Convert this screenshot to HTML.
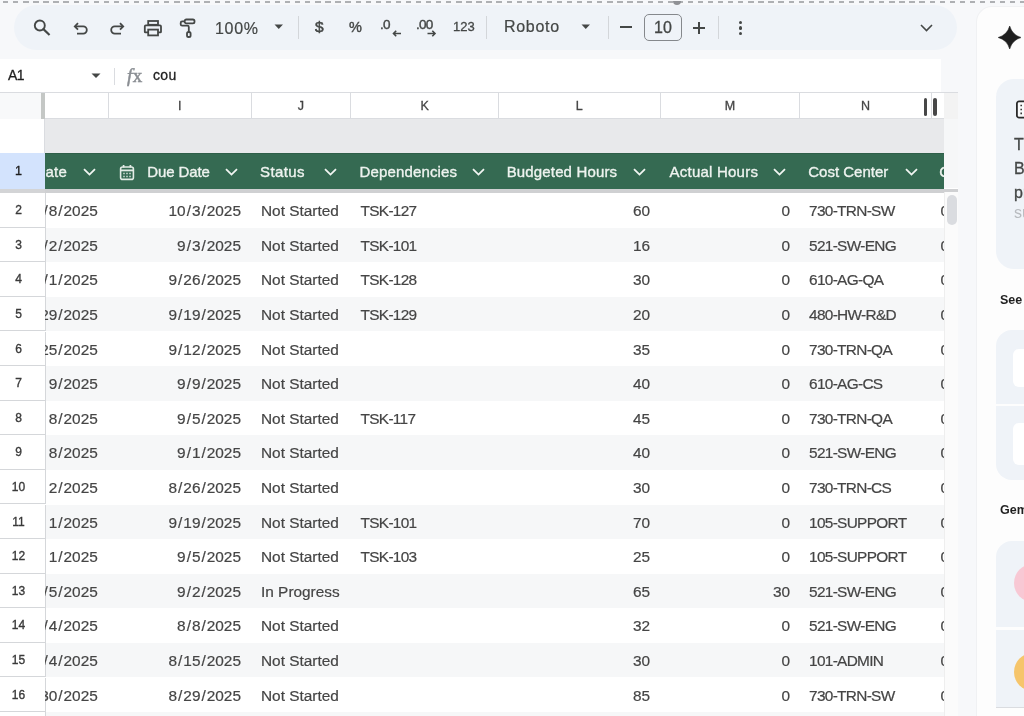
<!DOCTYPE html>
<html><head><meta charset="utf-8">
<style>
*{box-sizing:border-box;margin:0;padding:0}
html,body{width:1024px;height:716px;overflow:hidden}
#root{position:absolute;left:0;top:0;width:1024px;height:716px;overflow:hidden;will-change:transform;background:#f7f8fa}
body{position:relative;background:#f7f8fa;font-family:"Liberation Sans",sans-serif;color:#3c4043}
.abs{position:absolute}
.dash{position:absolute;left:-6.67px;top:1px;width:1040px;height:2px;background:repeating-linear-gradient(90deg,#aeb0b3 0 5.3px,transparent 5.3px 10.07px)}
.pill{position:absolute;left:14px;top:5px;width:943px;height:45px;border-radius:22.5px;background:#eff3f8}
.tb{position:absolute;color:#444746}
.sep{position:absolute;width:1px;background:#d3d6da}
.fbar{position:absolute;left:0;top:59px;width:941px;height:33px;background:#fff}
.grid{position:absolute;left:0;top:92px;width:958px;height:624px;background:#fff;overflow:hidden}
.colhdr{position:absolute;left:0;top:0;width:958px;height:27px;background:#fff;border-top:1px solid #dadce0;border-bottom:1px solid #dadce0}
.ch{position:absolute;top:0;height:26px;border-left:1px solid #dadce0;font-size:12.5px;color:#444;text-align:center;line-height:26px;-webkit-text-stroke:0.3px #444}
.t{position:absolute;white-space:nowrap;font-size:15.4px;line-height:18px;color:#454545;-webkit-text-stroke:0.2px #454545}
.sl{font-style:normal;margin:0 1px}
.w{letter-spacing:0px}
.c{letter-spacing:-0.68px}
.chev{position:absolute}
.rn{position:absolute;left:0;width:46px;border-bottom:1px solid #d5d7da;border-right:1px solid #d5d7da;background:#fff;font-size:12px;color:#3a3a3a;text-align:center;padding-right:8px;-webkit-text-stroke:0.35px #3a3a3a}
.band{position:absolute;left:45px;width:899px;background:#f6f7f8}
.hdr{position:absolute;left:45px;top:61px;width:899px;height:36px;background:#356a52;overflow:hidden;border-top:1px solid #2f5f49}
.ht{position:absolute;white-space:nowrap;font-size:15px;color:#eef3ef;line-height:18px;top:8.5px;letter-spacing:0.22px;-webkit-text-stroke:0.35px #eef3ef}
.panel{position:absolute;left:976px;top:6px;width:60px;height:720px;background:#fdfdfd;border-radius:16px 0 0 0;border-left:1px solid #f0f1f3;border-top:1px solid #f0f1f3}
.card{position:absolute;left:996px;width:40px;background:#eff3f8}
</style></head><body><div id="root">
<div class="dash"></div>
<div class="pill"></div>
<div class="abs" style="left:673px;top:1px;width:8px;height:4px;border-radius:0 0 4px 4px;background:#8f9195"></div>


<svg class="abs" style="left:32px;top:18px" width="20" height="20" viewBox="0 0 20 20"><circle cx="7.8" cy="7.5" r="5" fill="none" stroke="#444746" stroke-width="1.9"/><path d="M11.4 11.1 L16.8 16.3" stroke="#444746" stroke-width="2.1" stroke-linecap="square"/></svg>
<svg class="abs" style="left:72px;top:20px" width="18" height="16" viewBox="0 0 18 16"><path d="M6 3.2 L2.8 6.4 L6 9.6" fill="none" stroke="#444746" stroke-width="1.8"/><path d="M3 6.4 H11.2 A3.6 3.6 0 0 1 11.2 13.6 H5" fill="none" stroke="#444746" stroke-width="1.8"/></svg>
<svg class="abs" style="left:108px;top:20px" width="18" height="16" viewBox="0 0 18 16"><path d="M12 3.2 L15.2 6.4 L12 9.6" fill="none" stroke="#444746" stroke-width="1.8"/><path d="M15 6.4 H6.8 A3.6 3.6 0 0 0 6.8 13.6 H13" fill="none" stroke="#444746" stroke-width="1.8"/></svg>
<svg class="abs" style="left:142px;top:18px" width="22" height="20" viewBox="0 0 22 20"><rect x="6.2" y="3" width="9.8" height="3.8" fill="none" stroke="#444746" stroke-width="1.8"/><path d="M6.2 14.4 H3.5 Q2.8 14.4 2.8 13.7 V8.4 Q2.8 7.4 3.8 7.4 H18 Q19 7.4 19 8.4 V13.7 Q19 14.4 18.3 14.4 H16" fill="none" stroke="#444746" stroke-width="1.8"/><rect x="6.2" y="11.6" width="9.8" height="5.8" fill="none" stroke="#444746" stroke-width="1.8"/></svg>
<svg class="abs" style="left:178px;top:18px" width="20" height="22" viewBox="0 0 20 22"><rect x="6.7" y="1.5" width="9.8" height="3.8" rx="1.6" fill="none" stroke="#444746" stroke-width="1.8"/><path d="M6.7 3.4 H4.2 Q2.7 3.4 2.7 4.9 V6.2 Q2.7 7.6 4.2 7.6 H9.4 Q10.8 7.6 10.8 9 V13.8" fill="none" stroke="#444746" stroke-width="1.8"/><rect x="9" y="14" width="3.6" height="5" rx="1.6" fill="none" stroke="#444746" stroke-width="1.8"/></svg>
<div class="tb" style="left:215px;top:19.5px;font-size:16px;line-height:18px;letter-spacing:0.7px;-webkit-text-stroke:0.2px #444746">100%</div>
<svg class="abs" style="left:274px;top:24px" width="10" height="6" viewBox="0 0 10 6"><path d="M0.5 0.5 H9 L4.75 5 Z" fill="#444746"/></svg>
<div class="sep" style="left:298px;top:16px;height:23px"></div>
<div class="tb" style="left:315px;top:17.5px;font-size:15.5px;line-height:17px;-webkit-text-stroke:0.5px #444746">$</div>
<div class="tb" style="left:349px;top:19px;font-size:14.5px;line-height:17px;-webkit-text-stroke:0.4px #444746">%</div>
<div class="tb" style="left:380px;top:15.5px;font-size:13.5px;line-height:17px;letter-spacing:-0.8px;-webkit-text-stroke:0.4px #444746">.0</div>
<svg class="abs" style="left:391px;top:29px" width="12" height="9" viewBox="0 0 12 9"><path d="M10 4.5 H2.5 M5.2 1.8 L2.5 4.5 L5.2 7.2" fill="none" stroke="#444746" stroke-width="1.6"/></svg>
<div class="tb" style="left:416px;top:15.5px;font-size:13.5px;line-height:17px;letter-spacing:-0.8px;-webkit-text-stroke:0.4px #444746">.00</div>
<svg class="abs" style="left:426px;top:29px" width="12" height="9" viewBox="0 0 12 9"><path d="M1.5 4.5 H9 M6.3 1.8 L9 4.5 L6.3 7.2" fill="none" stroke="#444746" stroke-width="1.6"/></svg>
<div class="tb" style="left:453px;top:19px;font-size:13px;line-height:15px;-webkit-text-stroke:0.3px #444746">123</div>
<div class="sep" style="left:486px;top:16px;height:23px"></div>
<div class="tb" style="left:504px;top:17px;font-size:16px;line-height:19px;letter-spacing:0.7px;-webkit-text-stroke:0.2px #444746">Roboto</div>
<svg class="abs" style="left:581px;top:24px" width="10" height="6" viewBox="0 0 10 6"><path d="M0.5 0.5 H9 L4.75 5 Z" fill="#444746"/></svg>
<div class="sep" style="left:608px;top:16px;height:23px"></div>
<div class="abs" style="left:620px;top:25.5px;width:12px;height:2.1px;background:#444746"></div>
<div class="abs" style="left:644px;top:13.5px;width:38px;height:27px;border:1px solid #85888c;border-radius:5px;font-size:16px;line-height:25px;text-align:center;color:#444746;-webkit-text-stroke:0.3px #444746">10</div>
<div class="abs" style="left:693px;top:26.5px;width:12px;height:2.1px;background:#444746"></div>
<div class="abs" style="left:697.95px;top:21.5px;width:2.1px;height:12px;background:#444746"></div>
<div class="sep" style="left:718px;top:16px;height:23px"></div>
<div class="abs" style="left:739px;top:20.5px;width:3.4px;height:3.4px;border-radius:50%;background:#444746"></div>
<div class="abs" style="left:739px;top:26.3px;width:3.4px;height:3.4px;border-radius:50%;background:#444746"></div>
<div class="abs" style="left:739px;top:32px;width:3.4px;height:3.4px;border-radius:50%;background:#444746"></div>
<svg class="abs" style="left:920px;top:24px" width="13" height="8" viewBox="0 0 13 8"><path d="M1 1 L6.5 6.5 L12 1" fill="none" stroke="#444746" stroke-width="1.6"/></svg>

<div class="fbar"></div>
<div class="abs" style="left:8px;top:67px;font-size:14px;line-height:17px;color:#1f1f1f;letter-spacing:-0.6px;-webkit-text-stroke:0.3px #1f1f1f">A1</div>
<svg class="abs" style="left:91px;top:73px" width="10" height="6" viewBox="0 0 10 6"><path d="M0.5 0.5 H9.5 L5 5 Z" fill="#444746"/></svg>
<div class="sep" style="left:114px;top:68px;height:17px;background:#dadce0"></div>
<div class="abs" style="left:127px;top:66px;font-family:'Liberation Serif',serif;font-size:19px;line-height:20px;color:#8a8e93;-webkit-text-stroke:0.5px #8a8e93;white-space:nowrap"><i>f</i><span style="margin-left:0.5px">x</span></div>
<div class="abs" style="left:153px;top:67px;font-size:14px;line-height:17px;color:#1f1f1f;letter-spacing:0.35px;-webkit-text-stroke:0.3px #1f1f1f">cou</div>

<div class="grid">
<div class="colhdr">
<div class="abs" style="left:0;top:0;width:41px;height:26px;background:#f8f9fa"></div>
<div class="abs" style="left:41px;top:0;width:4px;height:27px;background:#c4c7c5"></div>
<div class="ch" style="left:107.8px;width:142.7px">I</div>
<div class="ch" style="left:250.5px;width:99.80000000000001px">J</div>
<div class="ch" style="left:350.3px;width:147.5px">K</div>
<div class="ch" style="left:497.8px;width:161.8px">L</div>
<div class="ch" style="left:659.6px;width:139.5px">M</div>
<div class="ch" style="left:799.1px;width:131.69999999999993px">N</div>
<div class="ch" style="left:930.8px;width:169.20000000000005px"></div>
<div class="abs" style="left:943.5px;top:0;width:15px;height:26px;background:#f3f3f3"></div>
<div class="abs" style="left:923.5px;top:5px;width:3.6px;height:18px;border-radius:2px;background:#474747"></div>
<div class="abs" style="left:933px;top:5px;width:3.6px;height:18px;border-radius:2px;background:#474747"></div>
</div>
<div class="abs" style="left:0;top:27px;width:45px;height:34px;background:#fff;border-right:1px solid #dadce0"></div>
<div class="abs" style="left:45px;top:27px;width:899px;height:34px;background:#e8e9eb"></div>
<div class="abs" style="left:944px;top:27px;width:14px;height:69px;background:#f6f7f8"></div>
<div class="abs" style="left:0;top:61px;width:45px;height:36px;background:#d3e3fd;font-size:12.5px;color:#1f1f1f;text-align:center;line-height:36px;padding-right:8px;-webkit-text-stroke:0.35px #1f1f1f">1</div>
<div class="hdr">
<div class="ht" style="left:0.5px">ate</div>
<svg class="chev" style="left:37.8px;top:14px" width="13" height="8" viewBox="0 0 13 8"><path d="M1 1.2 L6.5 6.6 L12 1.2" fill="none" stroke="#f1f5f2" stroke-width="1.8"/></svg>
<div class="ht" style="left:102.30000000000001px;letter-spacing:-0.1px">Due Date</div>
<svg class="chev" style="left:179.8px;top:14px" width="13" height="8" viewBox="0 0 13 8"><path d="M1 1.2 L6.5 6.6 L12 1.2" fill="none" stroke="#f1f5f2" stroke-width="1.8"/></svg>
<svg class="abs" style="left:73.8px;top:9.5px" width="16" height="17" viewBox="0 0 16 17"><rect x="1.6" y="3" width="12.8" height="12.4" rx="2" fill="none" stroke="#e3ece6" stroke-width="1.6"/><path d="M2 6.4 H14" stroke="#e3ece6" stroke-width="1.8"/><path d="M4.6 1 V3.5 M11.4 1 V3.5" stroke="#e3ece6" stroke-width="1.7"/><path d="M4.2 9.6 H5.8 M7.2 9.6 H8.8 M10.2 9.6 H11.8 M4.2 12.4 H5.8 M7.2 12.4 H8.8 M10.2 12.4 H11.8" stroke="#c9d8cf" stroke-width="1.5"/></svg>
<div class="ht" style="left:215px;letter-spacing:0.42px">Status</div>
<svg class="chev" style="left:279.2px;top:14px" width="13" height="8" viewBox="0 0 13 8"><path d="M1 1.2 L6.5 6.6 L12 1.2" fill="none" stroke="#f1f5f2" stroke-width="1.8"/></svg>
<div class="ht" style="left:314.4px;letter-spacing:0.16px">Dependencies</div>
<svg class="chev" style="left:426.9px;top:14px" width="13" height="8" viewBox="0 0 13 8"><path d="M1 1.2 L6.5 6.6 L12 1.2" fill="none" stroke="#f1f5f2" stroke-width="1.8"/></svg>
<div class="ht" style="left:461.7px;letter-spacing:0.15px">Budgeted Hours</div>
<svg class="chev" style="left:588.4px;top:14px" width="13" height="8" viewBox="0 0 13 8"><path d="M1 1.2 L6.5 6.6 L12 1.2" fill="none" stroke="#f1f5f2" stroke-width="1.8"/></svg>
<div class="ht" style="left:624.6px;letter-spacing:0.22px">Actual Hours</div>
<svg class="chev" style="left:728.0px;top:14px" width="13" height="8" viewBox="0 0 13 8"><path d="M1 1.2 L6.5 6.6 L12 1.2" fill="none" stroke="#f1f5f2" stroke-width="1.8"/></svg>
<div class="ht" style="left:763.2px;letter-spacing:0.01px">Cost Center</div>
<svg class="chev" style="left:859.7px;top:14px" width="13" height="8" viewBox="0 0 13 8"><path d="M1 1.2 L6.5 6.6 L12 1.2" fill="none" stroke="#f1f5f2" stroke-width="1.8"/></svg>
<div class="ht" style="left:894.2px;letter-spacing:0.22px">Cost</div>
</div>
<div class="abs" style="left:45px;top:97px;width:913px;height:4px;background:#cfd0d2"></div>
<div class="abs" style="left:0;top:97px;width:45px;height:4px;background:#d3d4d6"></div>
<div class="rn" style="top:101.1px;height:34.6px;line-height:34.6px">2</div>
<div class="abs" style="left:45px;top:101.1px;width:60px;height:34.6px;overflow:hidden"><div class="t" style="right:7.200000000000003px;top:9px;text-align:right">7<i class="sl">/</i>8<i class="sl">/</i>2025</div></div>
<div class="t" style="right:717px;top:110.1px">10<i class="sl">/</i>3<i class="sl">/</i>2025</div>
<div class="t w" style="left:261px;top:110.1px">Not Started</div>
<div class="t c" style="left:360.5px;top:110.1px">TSK-127</div>
<div class="t" style="right:308px;top:110.1px">60</div>
<div class="t" style="right:168px;top:110.1px">0</div>
<div class="t c" style="left:809px;top:110.1px">730-TRN-SW</div>
<div class="t" style="left:940.5px;top:110.1px">0</div>
<div class="band" style="top:135.7px;height:34.6px"></div>
<div class="rn" style="top:135.7px;height:34.6px;line-height:34.6px">3</div>
<div class="abs" style="left:45px;top:135.7px;width:60px;height:34.6px;overflow:hidden"><div class="t" style="right:7.200000000000003px;top:9px;text-align:right">7<i class="sl">/</i>2<i class="sl">/</i>2025</div></div>
<div class="t" style="right:717px;top:144.7px">9<i class="sl">/</i>3<i class="sl">/</i>2025</div>
<div class="t w" style="left:261px;top:144.7px">Not Started</div>
<div class="t c" style="left:360.5px;top:144.7px">TSK-101</div>
<div class="t" style="right:308px;top:144.7px">16</div>
<div class="t" style="right:168px;top:144.7px">0</div>
<div class="t c" style="left:809px;top:144.7px">521-SW-ENG</div>
<div class="t" style="left:940.5px;top:144.7px">0</div>
<div class="rn" style="top:170.3px;height:34.6px;line-height:34.6px">4</div>
<div class="abs" style="left:45px;top:170.3px;width:60px;height:34.6px;overflow:hidden"><div class="t" style="right:7.200000000000003px;top:9px;text-align:right">7<i class="sl">/</i>1<i class="sl">/</i>2025</div></div>
<div class="t" style="right:717px;top:179.3px">9<i class="sl">/</i>26<i class="sl">/</i>2025</div>
<div class="t w" style="left:261px;top:179.3px">Not Started</div>
<div class="t c" style="left:360.5px;top:179.3px">TSK-128</div>
<div class="t" style="right:308px;top:179.3px">30</div>
<div class="t" style="right:168px;top:179.3px">0</div>
<div class="t c" style="left:809px;top:179.3px">610-AG-QA</div>
<div class="t" style="left:940.5px;top:179.3px">0</div>
<div class="band" style="top:204.89999999999998px;height:34.6px"></div>
<div class="rn" style="top:204.89999999999998px;height:34.6px;line-height:34.6px">5</div>
<div class="abs" style="left:45px;top:204.89999999999998px;width:60px;height:34.6px;overflow:hidden"><div class="t" style="right:7.200000000000003px;top:9px;text-align:right">6<i class="sl">/</i>29<i class="sl">/</i>2025</div></div>
<div class="t" style="right:717px;top:213.89999999999998px">9<i class="sl">/</i>19<i class="sl">/</i>2025</div>
<div class="t w" style="left:261px;top:213.89999999999998px">Not Started</div>
<div class="t c" style="left:360.5px;top:213.89999999999998px">TSK-129</div>
<div class="t" style="right:308px;top:213.89999999999998px">20</div>
<div class="t" style="right:168px;top:213.89999999999998px">0</div>
<div class="t c" style="left:809px;top:213.89999999999998px">480-HW-R&amp;D</div>
<div class="t" style="left:940.5px;top:213.89999999999998px">0</div>
<div class="rn" style="top:239.5px;height:34.6px;line-height:34.6px">6</div>
<div class="abs" style="left:45px;top:239.5px;width:60px;height:34.6px;overflow:hidden"><div class="t" style="right:7.200000000000003px;top:9px;text-align:right">6<i class="sl">/</i>25<i class="sl">/</i>2025</div></div>
<div class="t" style="right:717px;top:248.5px">9<i class="sl">/</i>12<i class="sl">/</i>2025</div>
<div class="t w" style="left:261px;top:248.5px">Not Started</div>
<div class="t" style="right:308px;top:248.5px">35</div>
<div class="t" style="right:168px;top:248.5px">0</div>
<div class="t c" style="left:809px;top:248.5px">730-TRN-QA</div>
<div class="t" style="left:940.5px;top:248.5px">0</div>
<div class="band" style="top:274.1px;height:34.6px"></div>
<div class="rn" style="top:274.1px;height:34.6px;line-height:34.6px">7</div>
<div class="abs" style="left:45px;top:274.1px;width:60px;height:34.6px;overflow:hidden"><div class="t" style="right:7.200000000000003px;top:9px;text-align:right">9<i class="sl">/</i>2025</div></div>
<div class="t" style="right:717px;top:283.1px">9<i class="sl">/</i>9<i class="sl">/</i>2025</div>
<div class="t w" style="left:261px;top:283.1px">Not Started</div>
<div class="t" style="right:308px;top:283.1px">40</div>
<div class="t" style="right:168px;top:283.1px">0</div>
<div class="t c" style="left:809px;top:283.1px">610-AG-CS</div>
<div class="t" style="left:940.5px;top:283.1px">0</div>
<div class="rn" style="top:308.70000000000005px;height:34.6px;line-height:34.6px">8</div>
<div class="abs" style="left:45px;top:308.70000000000005px;width:60px;height:34.6px;overflow:hidden"><div class="t" style="right:7.200000000000003px;top:9px;text-align:right">8<i class="sl">/</i>2025</div></div>
<div class="t" style="right:717px;top:317.70000000000005px">9<i class="sl">/</i>5<i class="sl">/</i>2025</div>
<div class="t w" style="left:261px;top:317.70000000000005px">Not Started</div>
<div class="t c" style="left:360.5px;top:317.70000000000005px">TSK-117</div>
<div class="t" style="right:308px;top:317.70000000000005px">45</div>
<div class="t" style="right:168px;top:317.70000000000005px">0</div>
<div class="t c" style="left:809px;top:317.70000000000005px">730-TRN-QA</div>
<div class="t" style="left:940.5px;top:317.70000000000005px">0</div>
<div class="band" style="top:343.3px;height:34.6px"></div>
<div class="rn" style="top:343.3px;height:34.6px;line-height:34.6px">9</div>
<div class="abs" style="left:45px;top:343.3px;width:60px;height:34.6px;overflow:hidden"><div class="t" style="right:7.200000000000003px;top:9px;text-align:right">8<i class="sl">/</i>2025</div></div>
<div class="t" style="right:717px;top:352.3px">9<i class="sl">/</i>1<i class="sl">/</i>2025</div>
<div class="t w" style="left:261px;top:352.3px">Not Started</div>
<div class="t" style="right:308px;top:352.3px">40</div>
<div class="t" style="right:168px;top:352.3px">0</div>
<div class="t c" style="left:809px;top:352.3px">521-SW-ENG</div>
<div class="t" style="left:940.5px;top:352.3px">0</div>
<div class="rn" style="top:377.9px;height:34.6px;line-height:34.6px">10</div>
<div class="abs" style="left:45px;top:377.9px;width:60px;height:34.6px;overflow:hidden"><div class="t" style="right:7.200000000000003px;top:9px;text-align:right">2<i class="sl">/</i>2025</div></div>
<div class="t" style="right:717px;top:386.9px">8<i class="sl">/</i>26<i class="sl">/</i>2025</div>
<div class="t w" style="left:261px;top:386.9px">Not Started</div>
<div class="t" style="right:308px;top:386.9px">30</div>
<div class="t" style="right:168px;top:386.9px">0</div>
<div class="t c" style="left:809px;top:386.9px">730-TRN-CS</div>
<div class="t" style="left:940.5px;top:386.9px">0</div>
<div class="band" style="top:412.5px;height:34.6px"></div>
<div class="rn" style="top:412.5px;height:34.6px;line-height:34.6px">11</div>
<div class="abs" style="left:45px;top:412.5px;width:60px;height:34.6px;overflow:hidden"><div class="t" style="right:7.200000000000003px;top:9px;text-align:right">1<i class="sl">/</i>2025</div></div>
<div class="t" style="right:717px;top:421.5px">9<i class="sl">/</i>19<i class="sl">/</i>2025</div>
<div class="t w" style="left:261px;top:421.5px">Not Started</div>
<div class="t c" style="left:360.5px;top:421.5px">TSK-101</div>
<div class="t" style="right:308px;top:421.5px">70</div>
<div class="t" style="right:168px;top:421.5px">0</div>
<div class="t c" style="left:809px;top:421.5px">105-SUPPORT</div>
<div class="t" style="left:940.5px;top:421.5px">0</div>
<div class="rn" style="top:447.1px;height:34.6px;line-height:34.6px">12</div>
<div class="abs" style="left:45px;top:447.1px;width:60px;height:34.6px;overflow:hidden"><div class="t" style="right:7.200000000000003px;top:9px;text-align:right">1<i class="sl">/</i>2025</div></div>
<div class="t" style="right:717px;top:456.1px">9<i class="sl">/</i>5<i class="sl">/</i>2025</div>
<div class="t w" style="left:261px;top:456.1px">Not Started</div>
<div class="t c" style="left:360.5px;top:456.1px">TSK-103</div>
<div class="t" style="right:308px;top:456.1px">25</div>
<div class="t" style="right:168px;top:456.1px">0</div>
<div class="t c" style="left:809px;top:456.1px">105-SUPPORT</div>
<div class="t" style="left:940.5px;top:456.1px">0</div>
<div class="band" style="top:481.70000000000005px;height:34.6px"></div>
<div class="rn" style="top:481.70000000000005px;height:34.6px;line-height:34.6px">13</div>
<div class="abs" style="left:45px;top:481.70000000000005px;width:60px;height:34.6px;overflow:hidden"><div class="t" style="right:7.200000000000003px;top:9px;text-align:right">7<i class="sl">/</i>5<i class="sl">/</i>2025</div></div>
<div class="t" style="right:717px;top:490.70000000000005px">9<i class="sl">/</i>2<i class="sl">/</i>2025</div>
<div class="t w" style="left:261px;top:490.70000000000005px">In Progress</div>
<div class="t" style="right:308px;top:490.70000000000005px">65</div>
<div class="t" style="right:168px;top:490.70000000000005px">30</div>
<div class="t c" style="left:809px;top:490.70000000000005px">521-SW-ENG</div>
<div class="t" style="left:940.5px;top:490.70000000000005px">0</div>
<div class="rn" style="top:516.3000000000001px;height:34.6px;line-height:34.6px">14</div>
<div class="abs" style="left:45px;top:516.3000000000001px;width:60px;height:34.6px;overflow:hidden"><div class="t" style="right:7.200000000000003px;top:9px;text-align:right">7<i class="sl">/</i>4<i class="sl">/</i>2025</div></div>
<div class="t" style="right:717px;top:525.3000000000001px">8<i class="sl">/</i>8<i class="sl">/</i>2025</div>
<div class="t w" style="left:261px;top:525.3000000000001px">Not Started</div>
<div class="t" style="right:308px;top:525.3000000000001px">32</div>
<div class="t" style="right:168px;top:525.3000000000001px">0</div>
<div class="t c" style="left:809px;top:525.3000000000001px">521-SW-ENG</div>
<div class="t" style="left:940.5px;top:525.3000000000001px">0</div>
<div class="band" style="top:550.9px;height:34.6px"></div>
<div class="rn" style="top:550.9px;height:34.6px;line-height:34.6px">15</div>
<div class="abs" style="left:45px;top:550.9px;width:60px;height:34.6px;overflow:hidden"><div class="t" style="right:7.200000000000003px;top:9px;text-align:right">7<i class="sl">/</i>4<i class="sl">/</i>2025</div></div>
<div class="t" style="right:717px;top:559.9px">8<i class="sl">/</i>15<i class="sl">/</i>2025</div>
<div class="t w" style="left:261px;top:559.9px">Not Started</div>
<div class="t" style="right:308px;top:559.9px">30</div>
<div class="t" style="right:168px;top:559.9px">0</div>
<div class="t c" style="left:809px;top:559.9px">101-ADMIN</div>
<div class="t" style="left:940.5px;top:559.9px">0</div>
<div class="rn" style="top:585.5px;height:34.6px;line-height:34.6px">16</div>
<div class="abs" style="left:45px;top:585.5px;width:60px;height:34.6px;overflow:hidden"><div class="t" style="right:7.200000000000003px;top:9px;text-align:right">6<i class="sl">/</i>30<i class="sl">/</i>2025</div></div>
<div class="t" style="right:717px;top:594.5px">8<i class="sl">/</i>29<i class="sl">/</i>2025</div>
<div class="t w" style="left:261px;top:594.5px">Not Started</div>
<div class="t" style="right:308px;top:594.5px">85</div>
<div class="t" style="right:168px;top:594.5px">0</div>
<div class="t c" style="left:809px;top:594.5px">730-TRN-SW</div>
<div class="t" style="left:940.5px;top:594.5px">0</div>
<div class="band" style="top:620.1px;height:34.6px"></div>
<div class="rn" style="top:620.1px;height:34.6px"></div>
<div class="abs" style="left:944px;top:100px;width:14px;height:540px;background:#fbfbfb;border-left:1px solid #eeeeee"></div>
<div class="abs" style="left:946.5px;top:103px;width:10px;height:30px;border-radius:5px;background:#dadce0"></div>
</div>
<div class="panel"></div>
<svg class="abs" style="left:997.6px;top:26px" width="23.4" height="23" viewBox="0 0 24 24"><path d="M12 0 Q14.6 9.4 24 12 Q14.6 14.6 12 24 Q9.4 14.6 0 12 Q9.4 9.4 12 0 Z" fill="#1f1f1f" stroke="#1f1f1f" stroke-width="0.6" stroke-linejoin="round"/></svg>
<div class="card" style="top:79px;height:190px;border-radius:18px 0 0 18px"></div>
<svg class="abs" style="left:1016px;top:99.5px" width="14" height="19" viewBox="0 0 14 19"><rect x="0.9" y="1.4" width="15" height="16.2" rx="2.2" fill="#fafbfc" stroke="#2a2a2a" stroke-width="1.8"/><path d="M4.4 5.5 H6 M4.4 9.5 H6 M4.4 13.4 H6" stroke="#3a3a3a" stroke-width="1.7"/></svg>
<div class="abs" style="left:1014px;top:133px;font-size:16px;line-height:24.2px;color:#444746;-webkit-text-stroke:0.3px #444746">Th<br>Bu<br>pr</div>
<div class="abs" style="left:1014px;top:204px;font-size:16px;line-height:18px;color:#b8bbbf">su</div>
<div class="abs" style="left:1000px;top:293px;font-size:12.5px;line-height:15px;color:#1f1f1f;font-weight:bold">See</div>
<div class="card" style="top:330px;height:74px;border-radius:16px 0 0 0"></div>
<div class="abs" style="left:1013px;top:349px;width:20px;height:38px;background:#fff;border-radius:6px 0 0 6px"></div>
<div class="card" style="top:406px;height:74px;border-radius:0 0 0 16px"></div>
<div class="abs" style="left:1013px;top:423px;width:20px;height:42px;background:#fff;border-radius:6px 0 0 6px"></div>
<div class="abs" style="left:1000px;top:503px;font-size:12.5px;line-height:15px;color:#1f1f1f;font-weight:bold">Gem</div>
<div class="card" style="top:541px;height:86px;border-radius:16px 0 0 0"></div>
<div class="abs" style="left:1013.5px;top:564px;width:38px;height:38px;border-radius:50%;background:#f8c8d4"></div>
<div class="card" style="top:630px;height:78px;border-radius:0 0 0 0"></div>
<div class="abs" style="left:1013.5px;top:653px;width:38px;height:38px;border-radius:50%;background:#f6c56b"></div>
<div class="abs" style="left:996px;top:707px;width:40px;height:1px;background:#dadce0"></div>
</div></body></html>
